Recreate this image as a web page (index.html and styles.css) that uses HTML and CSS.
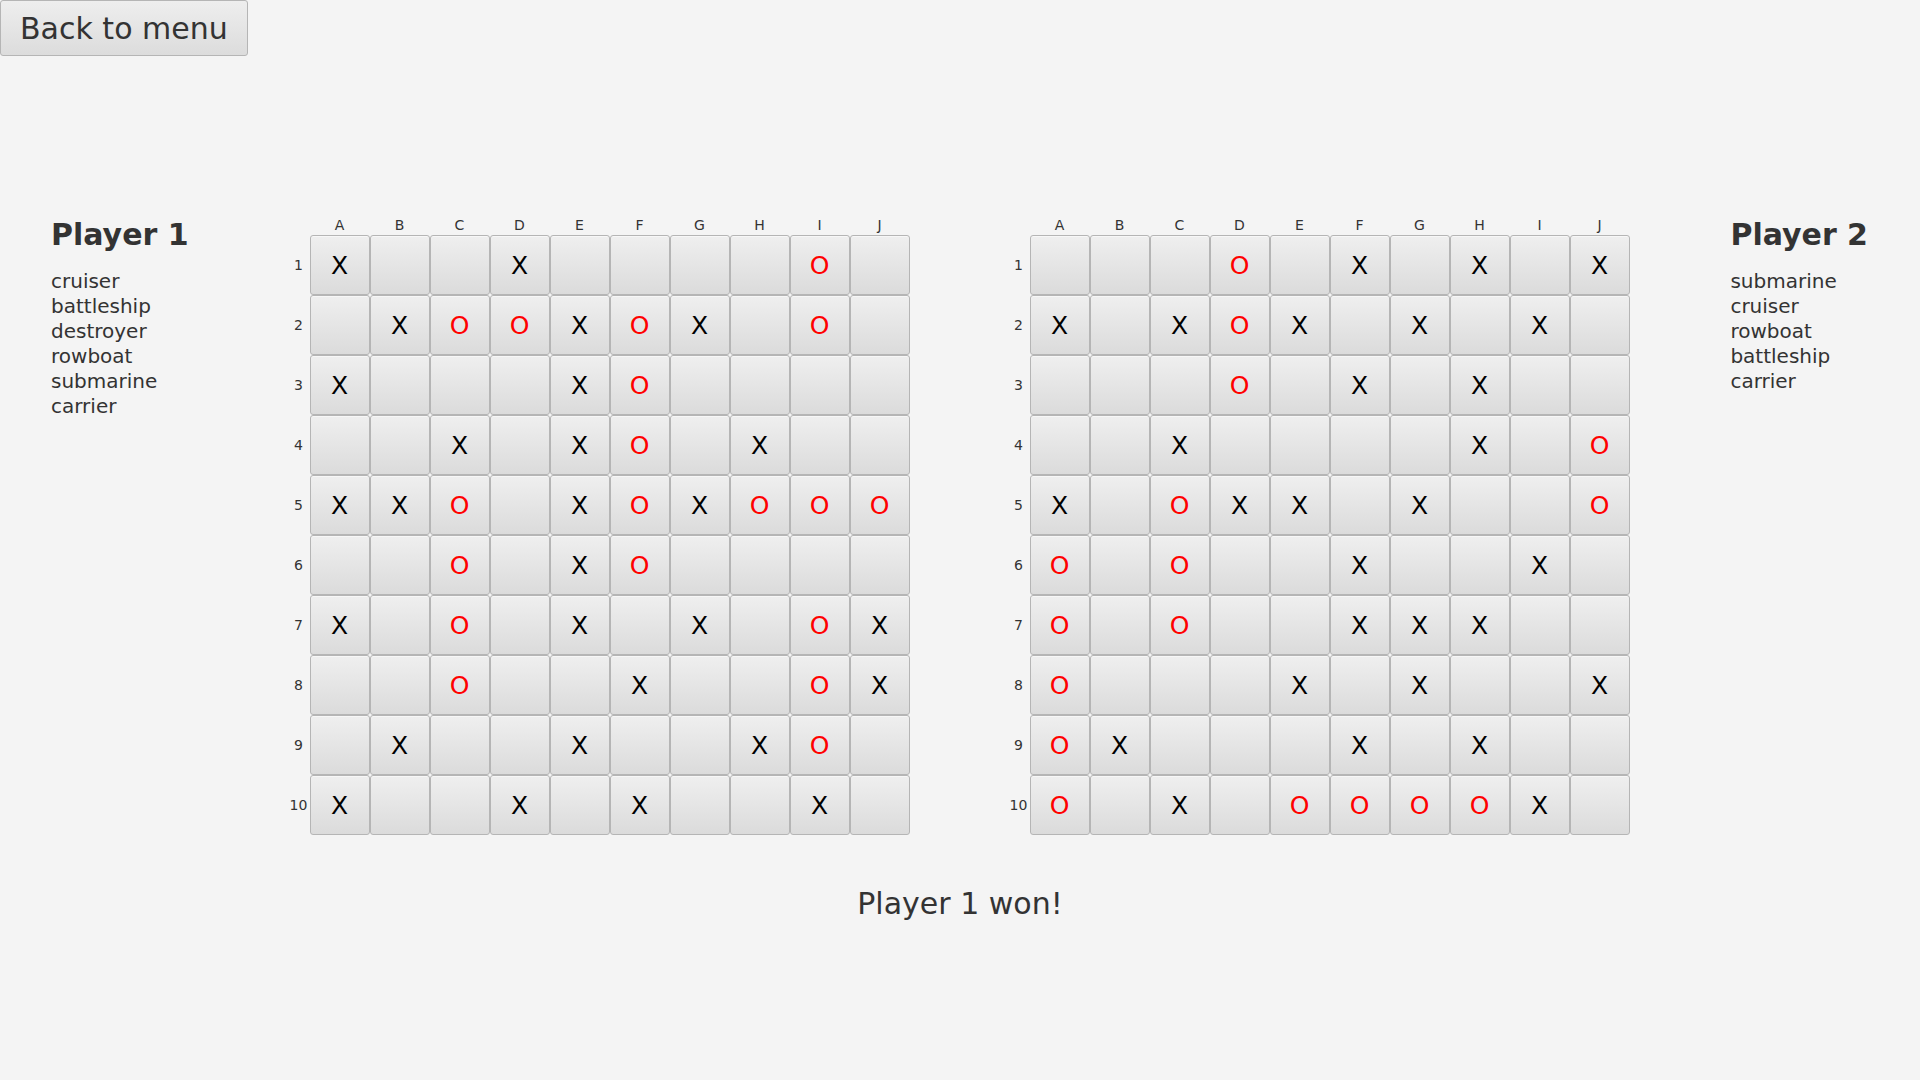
FILE: index.html
```html
<!DOCTYPE html>
<html>
<head>
  <title>Battleships</title>
  <link rel="stylesheet" href="styles.css">
</head>
<body>
  <button class="back-button">Back to menu</button>

  <div class="game">
    <div class="player">
      <h2 class="player-name">Player 1</h2>
      <ul class="ship-list">
        <li>cruiser</li>
        <li>battleship</li>
        <li>destroyer</li>
        <li>rowboat</li>
        <li>submarine</li>
        <li>carrier</li>
      </ul>
    </div>

    <div class="boards">
      <div class="board" id="board1"></div>
      <div class="board" id="board2"></div>
    </div>

    <div class="player">
      <h2 class="player-name">Player 2</h2>
      <ul class="ship-list">
        <li>submarine</li>
        <li>cruiser</li>
        <li>rowboat</li>
        <li>battleship</li>
        <li>carrier</li>
      </ul>
    </div>
  </div>

  <p class="result">Player 1 won!</p>

  <script src="script.js"></script>
</body>
</html>
```

FILE: styles.css
```css
body {
  margin: 0;
  background: #f4f4f4;
  font-family: "DejaVu Sans", "Liberation Sans", sans-serif;
  color: #333;
}

.back-button {
  display: block;
  box-sizing: border-box;
  height: 56px;
  padding: 0 19px;
  font-family: "DejaVu Sans", sans-serif;
  font-size: 30px;
  color: #333;
  background: linear-gradient(#eeeeee, #dcdcdc);
  border: 1px solid #b5b5b5;
  border-radius: 3px;
  cursor: pointer;
}

.game {
  display: flex;
  justify-content: space-between;
  margin-top: 160px;
  padding: 0 52px 0 51px;
}

.player-name {
  margin: 0;
  font-size: 30px;
  font-weight: bold;
  line-height: 38px;
}

.ship-list {
  list-style: none;
  margin: 15px 0 0;
  padding: 0;
  font-size: 20px;
  line-height: 25px;
}

.boards {
  display: flex;
  gap: 98px;
  margin-right: 2px;
}

.board {
  display: grid;
  grid-template-columns: 22px repeat(10, 60px);
  grid-template-rows: 19px repeat(10, 60px);
}

.col-label {
  font-size: 14px;
  line-height: 19px;
  text-align: center;
}

.row-label {
  display: flex;
  align-items: center;
  justify-content: center;
  font-size: 14px;
}

.cell {
  box-sizing: border-box;
  display: flex;
  align-items: center;
  justify-content: center;
  border: 1px solid #b5b5b5;
  border-radius: 3px;
  background: linear-gradient(#efefef, #dbdbdb);
  box-shadow: inset 0 1px 0 rgba(255, 255, 255, 0.5);
  font-size: 25px;
  color: #000;
}

.cell.hit {
  color: #ff0000;
}

.result {
  margin: 51px 0 0;
  text-align: center;
  font-size: 30px;
  line-height: 36px;
}
```

FILE: script.js
```js
var letters = "ABCDEFGHIJ";

var boards = {
  board1: [
    "X..X....O.",
    ".XOOXOX.O.",
    "X...XO....",
    "..X.XO.X..",
    "XXO.XOXOOO",
    "..O.XO....",
    "X.O.X.X.OX",
    "..O..X..OX",
    ".X..X..XO.",
    "X..X.X..X."
  ],
  board2: [
    "...O.X.X.X",
    "X.XOX.X.X.",
    "...O.X.X..",
    "..X....X.O",
    "X.OXX.X..O",
    "O.O..X..X.",
    "O.O..XXX..",
    "O...X.X..X",
    "OX...X.X..",
    "O.X.OOOOX."
  ]
};

function addDiv(parent, className, text) {
  var div = document.createElement("div");
  div.className = className;
  div.textContent = text;
  parent.appendChild(div);
}

for (var id in boards) {
  var board = document.getElementById(id);
  var rows = boards[id];

  addDiv(board, "corner", "");
  for (var c = 0; c < letters.length; c++) {
    addDiv(board, "col-label", letters[c]);
  }

  for (var r = 0; r < rows.length; r++) {
    addDiv(board, "row-label", String(r + 1));
    for (var k = 0; k < rows[r].length; k++) {
      var mark = rows[r][k];
      if (mark == "O") {
        addDiv(board, "cell hit", "O");
      } else if (mark == "X") {
        addDiv(board, "cell", "X");
      } else {
        addDiv(board, "cell", "");
      }
    }
  }
}
```
